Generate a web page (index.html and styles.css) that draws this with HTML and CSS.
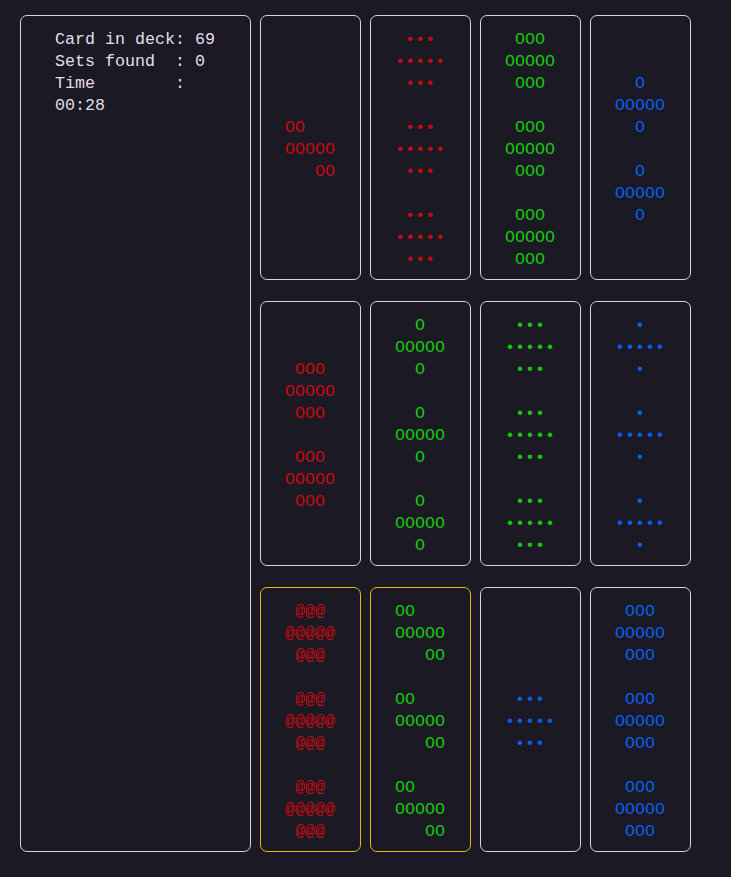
FILE: index.html
```html
<!DOCTYPE html>
<html>
<head>
<meta charset="utf-8">
<link rel="stylesheet" href="styles.css">
</head>
<body>
<div class="screen">
  <aside class="stats"><pre class="stats-text">Card in deck: 69
Sets found  : 0
Time        :
00:28</pre></aside>
  <main class="board">
    <div class="card red"><pre>OO   
OOOOO
   OO</pre></div>
    <div class="card red"><pre> ••• 
•••••
 ••• 

 ••• 
•••••
 ••• 

 ••• 
•••••
 ••• </pre></div>
    <div class="card green"><pre> OOO 
OOOOO
 OOO 

 OOO 
OOOOO
 OOO 

 OOO 
OOOOO
 OOO </pre></div>
    <div class="card blue"><pre>  O  
OOOOO
  O  

  O  
OOOOO
  O  </pre></div>

    <div class="card red"><pre> OOO 
OOOOO
 OOO 

 OOO 
OOOOO
 OOO </pre></div>
    <div class="card green"><pre>  O  
OOOOO
  O  

  O  
OOOOO
  O  

  O  
OOOOO
  O  </pre></div>
    <div class="card green"><pre> ••• 
•••••
 ••• 

 ••• 
•••••
 ••• 

 ••• 
•••••
 ••• </pre></div>
    <div class="card blue"><pre>  •  
•••••
  •  

  •  
•••••
  •  

  •  
•••••
  •  </pre></div>

    <div class="card red selected"><pre> @@@ 
@@@@@
 @@@ 

 @@@ 
@@@@@
 @@@ 

 @@@ 
@@@@@
 @@@ </pre></div>
    <div class="card green selected"><pre>OO   
OOOOO
   OO

OO   
OOOOO
   OO

OO   
OOOOO
   OO</pre></div>
    <div class="card blue"><pre> ••• 
•••••
 ••• </pre></div>
    <div class="card blue"><pre> OOO 
OOOOO
 OOO 

 OOO 
OOOOO
 OOO 

 OOO 
OOOOO
 OOO </pre></div>
  </main>
</div>
</body>
</html>
```

FILE: styles.css
```css
html, body {
  margin: 0;
  padding: 0;
  background: #1a1924;
}

body {
  width: 731px;
  height: 877px;
  overflow: hidden;
  font-family: "Liberation Mono", "DejaVu Sans Mono", monospace;
  font-size: 16.66px;
  line-height: 22px;
  color: #e2dfea;
}

pre {
  margin: 0;
  font: inherit;
  line-height: 22px;
}

.screen {
  display: flex;
  align-items: flex-start;
  gap: 9px;
  padding: 15px 0 0 20px;
}

.stats {
  box-sizing: border-box;
  width: 231px;
  height: 837px;
  border: 1px solid #d6d3e4;
  border-radius: 7px;
  padding: 13px 0 0 34px;
}

.board {
  display: grid;
  grid-template-columns: repeat(4, 101px);
  grid-auto-rows: 265px;
  column-gap: 9px;
  row-gap: 21px;
}

.card {
  box-sizing: border-box;
  border: 1px solid #d6d3e4;
  border-radius: 7px;
  padding: 13px 5px 8px 4px;
  display: flex;
  flex-direction: column;
  justify-content: center;
  align-items: center;
}

.card.selected {
  border-color: #e8b90c;
}

.red { color: #c80a12; }
.green { color: #16c60c; }
.blue { color: #0a5fe8; }
```
